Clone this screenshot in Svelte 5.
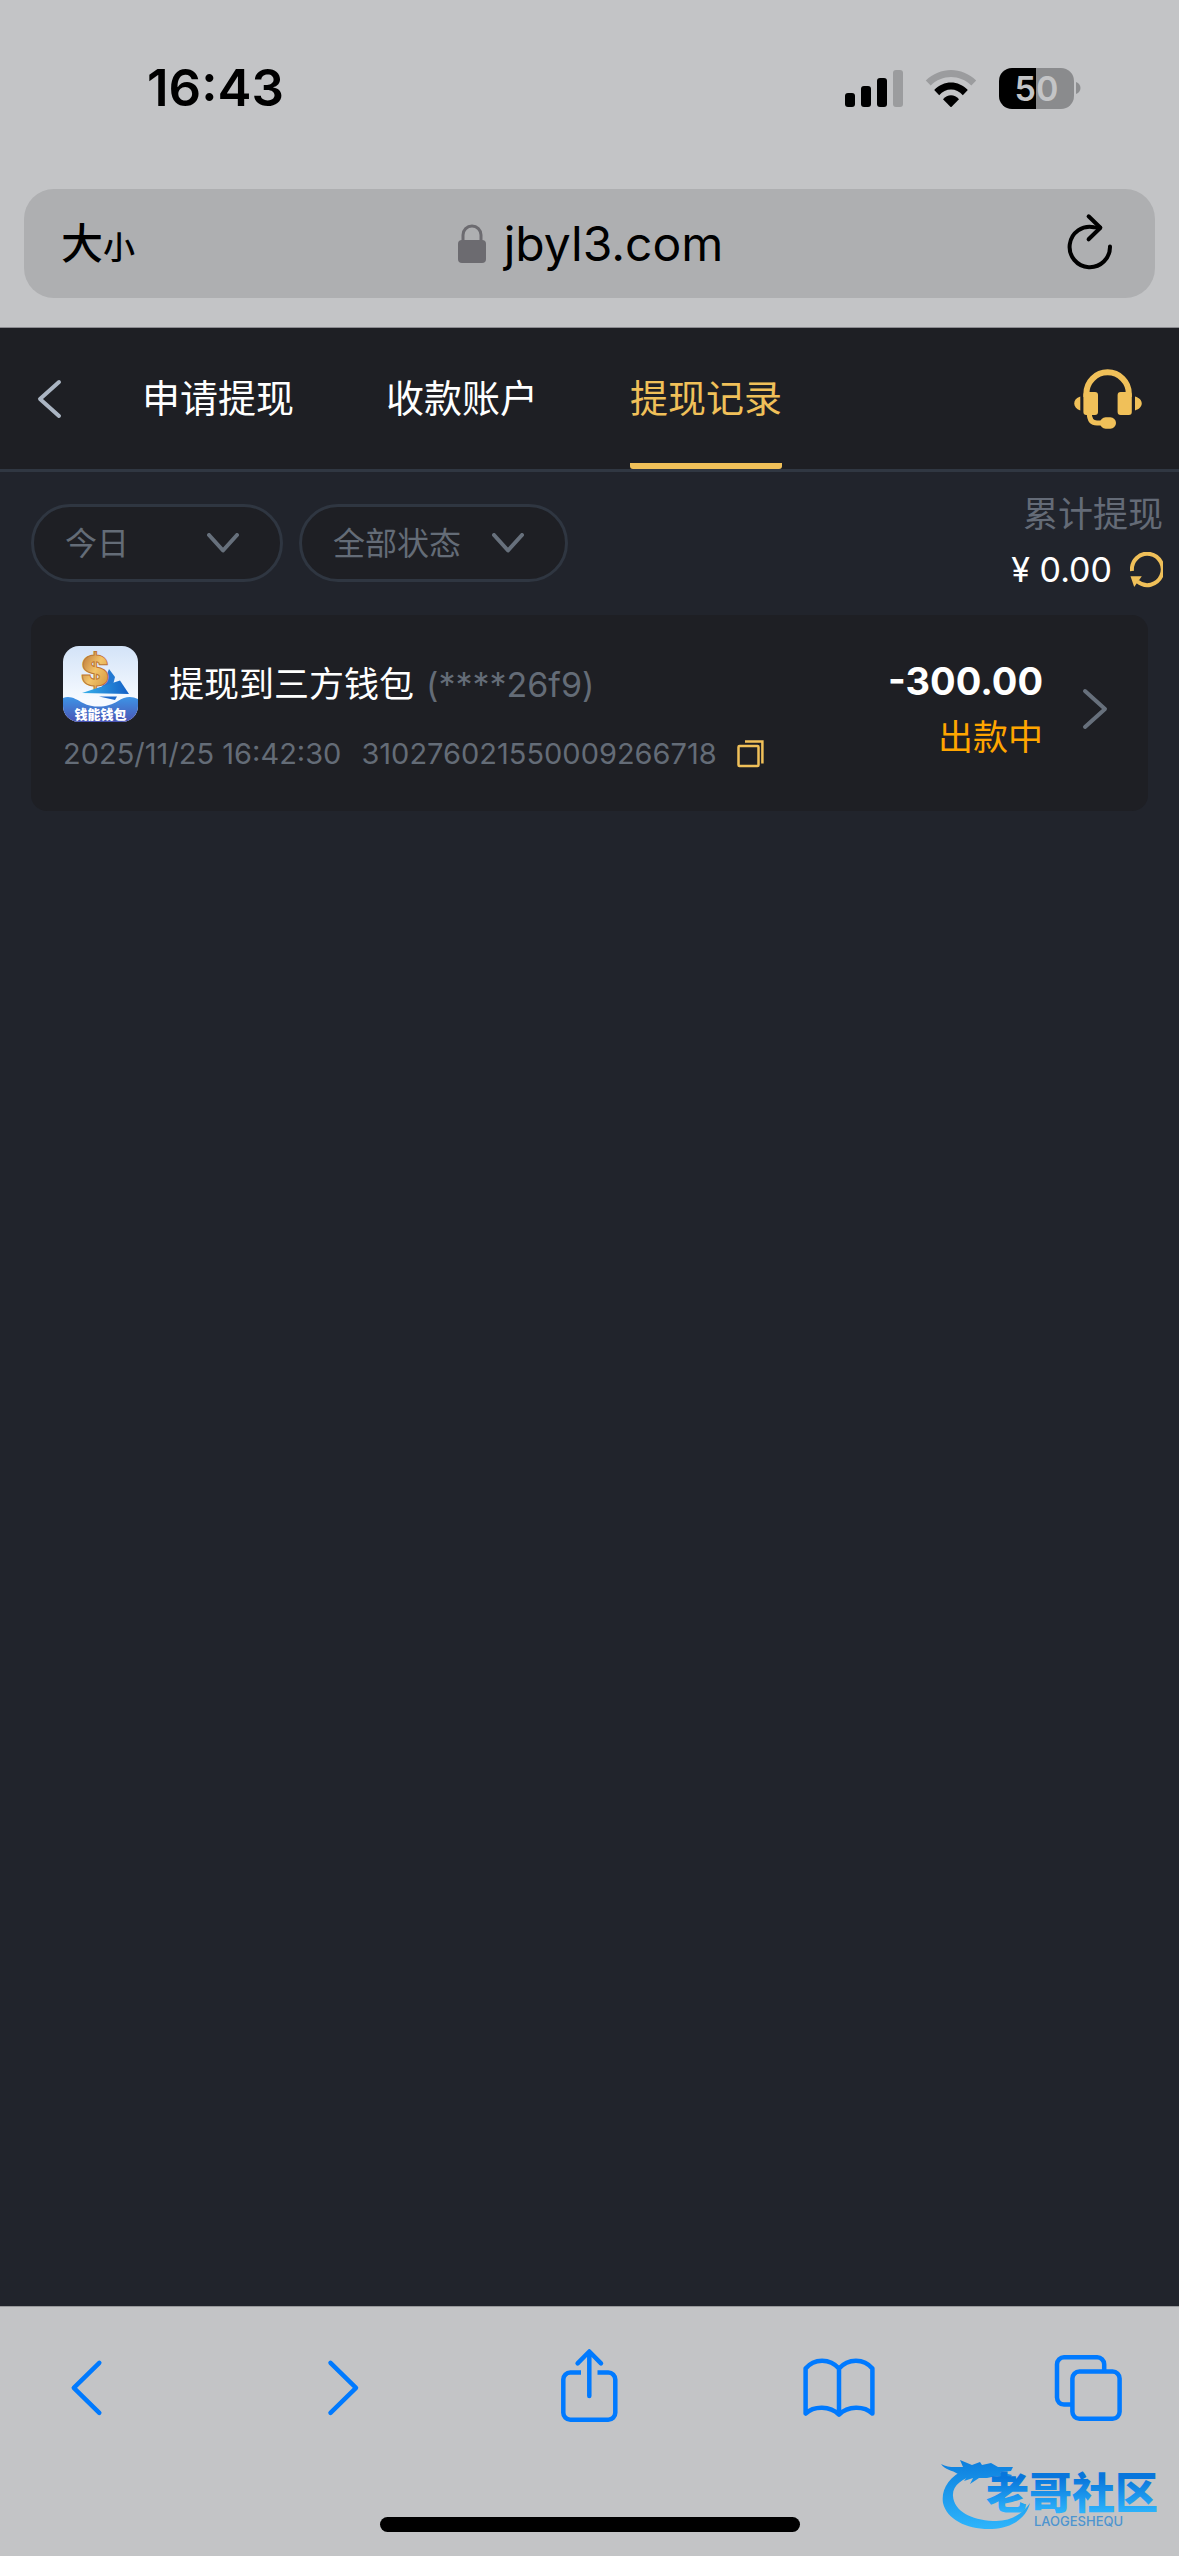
<script>
	let day = 'today'
	let status = 'all'

	const tabs = [
		{ id: 'apply', name: '申请提现' },
		{ id: 'accounts', name: '收款账户' },
		{ id: 'records', name: '提现记录' }
	]
	let activeTab = 'records'

	const records = [
		{
			title: '提现到三方钱包',
			tail: '(****26f9)',
			time: '2025/11/25 16:42:30',
			order: '310276021550009266718',
			amount: '-300.00',
			state: '出款中'
		}
	]
</script>

<div class="phone">
	<header class="browser-top">
		<div class="status-bar">
			<span class="clock">16:43</span>
			<div class="indicators">
				<svg width="58" height="37" viewBox="0 0 58 37" aria-hidden="true">
					<rect y="23" width="10" height="14" rx="3" />
					<rect x="16" y="16" width="10" height="21" rx="3" />
					<rect x="32" y="8" width="10" height="29" rx="3" />
					<rect x="48" width="10" height="37" rx="3" fill="#9b9c9e" />
				</svg>
				<svg class="wifi" width="52" height="37" viewBox="0 0 52 37" aria-hidden="true">
					<path d="M.8 10.6C15-3.5 37-3.5 51.2 10.6L46.3 15.6C35 4.2 17 4.2 5.7 15.6Z" fill="#9b9c9e" />
					<path d="M9.2 20C18.5 10 33.5 10 42.8 20L37.8 25.3C31.5 17.6 20.5 17.6 14.2 25.3Z" />
					<path d="M18 29.2C22.5 23.8 29.5 23.8 34 29.2L26 37.4Z" />
				</svg>
				<div class="battery"><span>50</span></div>
				<svg width="5" height="12" viewBox="0 0 5 12" aria-hidden="true">
					<path d="M0 0C6 2 6 10 0 12Z" fill="#8d8e90" />
				</svg>
			</div>
		</div>
		<div class="address-bar">
			<button class="text-size" aria-label="大小"><span>大</span><small>小</small></button>
			<button class="address">
				<svg width="28" height="40" viewBox="0 0 28 40" aria-hidden="true">
					<path d="M5 18V11a9 9 0 0 1 18 0v7" fill="none" stroke="#6c6b70" stroke-width="3" />
					<rect y="16" width="28" height="23" rx="4" fill="#6c6b70" />
				</svg>
				jbyl3.com
			</button>
			<button class="reload" aria-label="Reload">
				<svg width="48" height="62" viewBox="0 0 48 62" fill="none" stroke="#000" stroke-width="4" stroke-linecap="round" stroke-linejoin="round">
					<path d="M44 33.5A20.2 20.2 0 1 1 28 14.2L34 14.6" />
					<path d="M22.6 3.3 34.4 14.7 22.6 26.3" />
				</svg>
			</button>
		</div>
	</header>

	<nav>
		<button class="back" aria-label="Back">
			<svg width="26" height="40" viewBox="0 0 26 40" fill="none" stroke="#abb5c3" stroke-width="4" stroke-linecap="round" stroke-linejoin="round">
				<path d="M22 3 3 20 22 37" />
			</svg>
		</button>
		<div class="tabs">
			{#each tabs as tab}
				<button class:active={tab.id === activeTab} on:click={() => (activeTab = tab.id)}>{tab.name}</button>
			{/each}
		</div>
		<button class="service" aria-label="Customer service">
			<svg width="68" height="60" viewBox="0 0 68 60" fill="#f0c059">
				<path d="M12.4 28V24.5a21.2 21.2 0 0 1 42.4 0V28" fill="none" stroke="#f0c059" stroke-width="6" />
				<rect x="9.4" y="23" width="14.6" height="23" rx="3" />
				<rect x="43.6" y="23" width="14.2" height="23" rx="3" />
				<path d="M6.3 27.6V41.4C-1.8 39-1.8 30 6.3 27.6ZM61 27.6V41.4C70 39 70 30 61 27.6Z" />
				<path d="M15.3 44C15.3 51 18 54 23 54H30" fill="none" stroke="#f0c059" stroke-width="5" />
				<rect x="26" y="48.3" width="16" height="11.4" rx="5.7" />
			</svg>
		</button>
	</nav>

	<main>
		<div class="filters">
			<label class="pill">
				<select class="day" aria-label="日期" bind:value={day}>
					<option value="today">今日</option>
				</select>
				<svg width="32" height="20" viewBox="0 0 32 20"><path d="M2 2 16 17.5 30 2" /></svg>
			</label>
			<label class="pill">
				<select class="state-filter" aria-label="状态" bind:value={status}>
					<option value="all">全部状态</option>
				</select>
				<svg width="32" height="20" viewBox="0 0 32 20"><path d="M2 2 16 17.5 30 2" /></svg>
			</label>
			<div class="total">
				<span class="total-label">累计提现</span>
				<div class="total-value">
					<span>¥ 0.00</span>
					<button aria-label="Refresh">
						<svg width="33" height="36" viewBox="0 0 33 36">
							<path d="M2 19A15.4 15.7 0 1 1 7.5 29.5" fill="none" stroke="#f0c059" stroke-width="4" />
							<path d="M.5 24.2H11.8L4.2 35Z" fill="#f0c059" />
						</svg>
					</button>
				</div>
			</div>
		</div>

		{#each records as record}
			<article>
				<div class="info">
					<div class="title-row">
						<svg class="wallet" width="75" height="76" viewBox="0 0 75 76" aria-hidden="true">
							<defs>
								<linearGradient id="sky" x1="0" y1="0" x2="0" y2="1">
									<stop offset="0" stop-color="#d3e3f8" />
									<stop offset=".7" stop-color="#f6faff" />
								</linearGradient>
								<linearGradient id="sea" x1="0" y1="0" x2="0" y2="1">
									<stop offset="0" stop-color="#3d94e6" />
									<stop offset="1" stop-color="#4b55b4" />
								</linearGradient>
								<linearGradient id="sail" x1="0" y1="0" x2="1" y2="0">
									<stop offset="0" stop-color="#37b0ea" />
									<stop offset="1" stop-color="#1460c6" />
								</linearGradient>
								<linearGradient id="gold" x1="0" y1="0" x2="1" y2="1">
									<stop offset="0" stop-color="#a9602a" />
									<stop offset=".5" stop-color="#f3c469" />
									<stop offset="1" stop-color="#c98a34" />
								</linearGradient>
							</defs>
							<rect width="75" height="76" fill="url(#sky)" />
							<path d="M46 23 52 31 50 39 38 43Z" fill="#2379d2" />
							<text class="coin" x="32" y="40" text-anchor="middle" fill="url(#gold)">$</text>
							<path d="M19 47 57 34.5 66 48Z" fill="url(#sail)" />
							<path d="M36 50.5H54L52 54Z" fill="#1d69cb" />
							<path d="M0 52C7 49 13 53 20 57 32 63 46 61 55 55 62 50 69 50 75 53V76H0Z" fill="url(#sea)" />
							<text class="wallet-name" x="37.5" y="73" text-anchor="middle" fill="#fff">钱能钱包</text>
						</svg>
						<h2>{record.title}<span>{record.tail}</span></h2>
					</div>
					<div class="meta">
						<time>{record.time}</time>
						<span>{record.order}</span>
						<button aria-label="Copy order number">
							<svg width="28" height="28" viewBox="0 0 28 28" fill="none" stroke="#f0c059" stroke-width="2.5">
								<rect x="1.5" y="6" width="20" height="20" rx="1" />
								<path d="M8 1.4H25.4V23.5" />
							</svg>
						</button>
					</div>
				</div>
				<div class="result">
					<strong>{record.amount}</strong>
					<span>{record.state}</span>
				</div>
				<button class="detail" aria-label="Details">
					<svg width="28" height="42" viewBox="0 0 28 42" fill="none" stroke="#67707c" stroke-width="4" stroke-linecap="round" stroke-linejoin="round">
						<path d="M4 3 24 21 4 39" />
					</svg>
				</button>
			</article>
		{/each}
	</main>

	<footer>
		<div class="toolbar">
			<button aria-label="Previous page">
				<svg width="72" height="78" viewBox="0 0 72 78"><path d="M45.3 15.8 19.8 40.8 45.3 65.8" /></svg>
			</button>
			<button aria-label="Next page">
				<svg width="72" height="78" viewBox="0 0 72 78"><path d="M26.5 15.8 52 40.8 26.5 65.8" /></svg>
			</button>
			<button aria-label="Share">
				<svg width="72" height="78" viewBox="0 0 72 78">
					<path class="butt" d="M27 25.5H16.3a7 7 0 0 0-7 7V65.7a7 7 0 0 0 7 7H54.3a7 7 0 0 0 7-7V32.5a7 7 0 0 0-7-7H43.5" />
					<path d="M35.3 49V5M23.6 16.3 35.3 4.5 47 16.3" />
				</svg>
			</button>
			<button aria-label="Bookmarks">
				<svg width="72" height="78" viewBox="0 0 72 78">
					<path d="M2.6 66.5V21.5C11 11 27 11 36 21.5 45 11 61 11 69.4 21.5V66.5C61 58.5 45 58.5 36 67.6 27 58.5 11 58.5 2.6 66.5ZM36 21.5V67" />
				</svg>
			</button>
			<button aria-label="Tabs">
				<svg width="72" height="78" viewBox="0 0 72 78">
					<rect x="19.4" y="24.5" width="47.2" height="47.3" rx="7" />
					<path class="butt" d="M51.2 23V17.3a7 7 0 0 0-7-7H11a7 7 0 0 0-7 7V50.6a7 7 0 0 0 7 7H18" />
				</svg>
			</button>
		</div>
		<div class="home-bar"></div>

		<svg class="community" width="224" height="84" viewBox="0 0 224 84">
			<defs>
				<linearGradient id="water" gradientUnits="userSpaceOnUse" x1="0" y1="8" x2="0" y2="78">
					<stop offset="0" stop-color="#0b7ddd" />
					<stop offset="1" stop-color="#2db4fb" />
				</linearGradient>
				<linearGradient id="water-text" gradientUnits="userSpaceOnUse" x1="0" y1="28" x2="0" y2="62">
					<stop offset="0" stop-color="#0876dc" />
					<stop offset="1" stop-color="#2cb2fb" />
				</linearGradient>
			</defs>
			<g fill="url(#water)">
				<path d="M26 19C8 27 1 40 3 53 7 70 28 80 52 79 71 78 86 69 90 53 81 66 68 72 53 71 31 70 14 61 13 46 12 36 22 28 36 25Z" />
				<path d="M1 14C8 18 14 17 23 17L20 10 32 15 40 12 42 15 51 13 58 17 73 17 71 21 60 22 72 25 69 29 57 26 47 28 39 28 30 34 33 28 24 31 29 24 18 24C12 20 5 20 1 14Z" />
			</g>
			<text class="community-name" x="46" y="59" fill="url(#water-text)">老哥社区</text>
			<text class="community-latin" x="94" y="76" fill="#4d94cf">LAOGESHEQU</text>
		</svg>
	</footer>
</div>

<style>
	:global(body) {
		margin: 0;
		background: #21242c;
	}

	.phone {
		display: flex;
		flex-direction: column;
		min-height: 100vh;
		font-family: Inter, "Noto Sans CJK SC", sans-serif;
		background: #21242c;
		color: #fff;
	}

	button {
		display: flex;
		align-items: center;
		padding: 0;
		border: 0;
		background: none;
		color: inherit;
		font: inherit;
		cursor: pointer;
	}

	svg {
		display: block;
		flex: none;
	}

	.browser-top {
		padding: 58px 24px 29px;
		border-bottom: 1px solid #8b8b90;
		background: #c3c4c6;
		color: #000;
	}

	.status-bar {
		display: flex;
		align-items: center;
		justify-content: space-between;
		padding: 0 74px 0 123px;
		margin-bottom: 71px;
	}

	.clock {
		font-size: 51px;
		font-weight: 600;
		line-height: 60px;
	}

	.indicators {
		display: flex;
		align-items: center;
	}

	.wifi {
		margin: 0 22px;
	}

	.battery {
		width: 75px;
		margin-right: 2px;
		border-radius: 13px;
		background: linear-gradient(90deg, #000 50%, #8a8b8d 50%);
		color: #c3c4c6;
		font-size: 34px;
		font-weight: 600;
		line-height: 41px;
		text-align: center;
	}

	.address-bar {
		display: grid;
		grid-template-columns: 1fr auto 1fr;
		align-items: center;
		height: 109px;
		padding: 0 41px 0 37px;
		border-radius: 30px;
		background: #aeafb1;
	}

	.text-size {
		align-items: baseline;
		padding-top: 4px;
		font-weight: 500;
		font-size: 42px;
		line-height: 60px;
	}

	.text-size small {
		font-size: 32px;
	}

	.address {
		gap: 18px;
		padding-left: 6px;
		font-size: 48px;
		line-height: 60px;
	}

	.reload {
		justify-self: end;
	}

	nav {
		display: flex;
		align-items: stretch;
		height: 141px;
		padding: 0 37px;
		border-bottom: 3px solid #303742;
		background: #1e1f24;
	}

	.tabs {
		display: flex;
		gap: 92px;
		margin-left: 79px;
	}

	.tabs button {
		border-bottom: 6px solid transparent;
		font-size: 38px;
	}

	.tabs .active {
		color: #f0c059;
		background: linear-gradient(#f0c059, #f0c059) bottom / 100% 6px no-repeat border-box;
		border-radius: 3px;
	}

	.service {
		margin-left: auto;
	}

	main {
		flex: 1;
		padding: 24px 31px 0;
	}

	.filters {
		display: flex;
		align-items: center;
		gap: 16px;
		margin: 0 -15px 25px 0;
	}

	.pill {
		display: grid;
		align-items: center;
	}

	.pill select,
	.pill svg {
		grid-area: 1 / 1;
	}

	.pill select {
		height: 78px;
		padding: 0 31px;
		border: 3px solid #2f3641;
		border-radius: 39px;
		appearance: none;
		background: #1e1f24;
		color: #646c77;
		font: inherit;
		font-size: 32px;
	}

	.day {
		width: 252px;
	}

	.state-filter {
		width: 269px;
	}

	.pill svg {
		justify-self: end;
		margin-right: 44px;
		fill: none;
		stroke: #67707c;
		stroke-width: 4;
		stroke-linecap: round;
		stroke-linejoin: round;
		pointer-events: none;
	}

	.total {
		margin-left: auto;
		text-align: right;
		font-size: 35px;
	}

	.total-label {
		display: block;
		color: #646b77;
		line-height: 36px;
	}

	.total-value {
		display: flex;
		align-items: center;
		justify-content: flex-end;
		gap: 18px;
		margin-top: 18px;
		font-size: 34px;
		line-height: 40px;
	}

	article {
		display: flex;
		align-items: center;
		padding: 31px 39px 39px 32px;
		border-radius: 16px;
		background: #1e1f24;
	}

	.info {
		flex: 1;
		align-self: flex-start;
	}

	.title-row {
		display: flex;
		align-items: center;
		gap: 31px;
	}

	.wallet {
		border-radius: 16px;
	}

	.coin {
		font-size: 42px;
		font-weight: 900;
		stroke: #bd7633;
		stroke-width: 1;
	}

	.wallet-name {
		font-size: 13px;
		font-weight: 900;
	}

	h2 {
		margin: 0;
		font-size: 35px;
		font-weight: 400;
		line-height: 48px;
	}

	h2 span {
		margin-left: 12px;
		color: #646c77;
		font-size: 34px;
	}

	.meta {
		display: flex;
		align-items: center;
		gap: 20px;
		margin-top: 14px;
		color: #646c77;
		font-size: 29px;
		line-height: 36px;
	}

	.result {
		display: flex;
		flex-direction: column;
		align-items: flex-end;
		gap: 12px;
		margin-right: 38px;
	}

	.result strong {
		font-size: 38px;
		font-weight: 700;
		line-height: 44px;
	}

	.result span {
		color: #ffa500;
		font-size: 35px;
		line-height: 44px;
	}

	footer {
		position: relative;
		padding: 40px 54px 24px;
		border-top: 1px solid #98999b;
		background: #c3c4c6;
	}

	.toolbar {
		display: flex;
		justify-content: space-between;
	}

	.toolbar svg {
		fill: none;
		stroke: #007aff;
		stroke-width: 4.5;
		stroke-linecap: round;
		stroke-linejoin: round;
	}

	.toolbar .butt {
		stroke-linecap: butt;
	}

	.home-bar {
		width: 420px;
		height: 15px;
		margin: 92px auto 0;
		border-radius: 8px;
		background: #000;
	}

	/* sits over the corner of the toolbar */
	.community {
		position: absolute;
		right: 15px;
		bottom: 22px;
	}

	.community-name {
		font-size: 43px;
		font-weight: 900;
	}

	.community-latin {
		font-size: 13px;
		font-weight: 500;
	}
</style>
